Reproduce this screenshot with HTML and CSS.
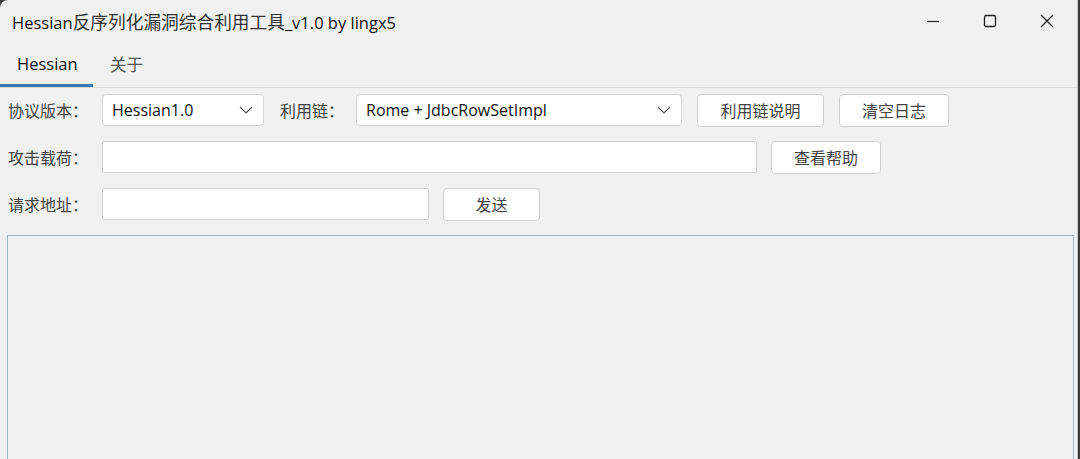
FILE: index.html
```html
<!DOCTYPE html>
<html lang="zh">
<head>
    <meta charset="UTF-8">
    <title>Hessian反序列化漏洞综合利用工具</title>
    <link rel="stylesheet" href="styles.css">
</head>
<body>
    <div class="window">
        <div class="titlebar">
            <span class="title">Hessian<span class="title-cn">反序列化漏洞综合利用工具</span>_v1.0 by lingx5</span>
            <div class="controls">
                <span class="ctl">
                    <svg width="14" height="14" viewBox="0 0 14 14"><path d="M1 7.5h12" stroke="#222" stroke-width="1.2"/></svg>
                </span>
                <span class="ctl">
                    <svg width="14" height="14" viewBox="0 0 14 14"><rect x="1.5" y="1.5" width="11" height="11" rx="1.5" fill="none" stroke="#222" stroke-width="1.3"/></svg>
                </span>
                <span class="ctl">
                    <svg width="16" height="16" viewBox="0 0 16 16"><path d="M2 2l12 12M14 2L2 14" stroke="#222" stroke-width="1.3"/></svg>
                </span>
            </div>
        </div>

        <div class="tabs">
            <span class="tab active">Hessian</span>
            <span class="tab">关于</span>
        </div>

        <div class="content">
            <div class="row">
                <label class="label">协议版本：</label>
                <div class="select sel-version">
                    <span>Hessian1.0</span>
                    <svg width="14" height="8" viewBox="0 0 14 8"><path d="M1 1l6 6 6-6" fill="none" stroke="#555" stroke-width="1.2"/></svg>
                </div>
                <label class="label label-chain">利用链：</label>
                <div class="select sel-chain">
                    <span>Rome + JdbcRowSetImpl</span>
                    <svg width="14" height="8" viewBox="0 0 14 8"><path d="M1 1l6 6 6-6" fill="none" stroke="#555" stroke-width="1.2"/></svg>
                </div>
                <button class="btn btn-info">利用链说明</button>
                <button class="btn btn-clear">清空日志</button>
            </div>

            <div class="row">
                <label class="label">攻击载荷：</label>
                <input class="field field-payload" type="text">
                <button class="btn btn-help">查看帮助</button>
            </div>

            <div class="row">
                <label class="label">请求地址：</label>
                <input class="field field-url" type="text">
                <button class="btn btn-send">发送</button>
            </div>

            <div class="log"></div>
        </div>
    </div>
</body>
</html>
```

FILE: styles.css
```css
body {
    margin: 0;
    background: #3a3a3a;
    font-family: 'Open Sans', 'Noto Sans CJK SC', sans-serif;
    color: #1a1a1a;
}

.window {
    height: 459px;
    background: #f1f1f1;
    border-top-left-radius: 8px;
    border-right: 1px solid #c9c9c9;
    margin-right: 2px;
    overflow: hidden;
    display: flex;
    flex-direction: column;
}

.titlebar {
    height: 42px;
    display: flex;
    align-items: center;
    justify-content: space-between;
    padding-left: 12px;
}

.title {
    font-size: 16.5px;
    font-family: 'Open Sans', 'Noto Sans CJK SC', sans-serif;
    color: #111;
    margin-top: -1px;
}

.title-cn {
    font-size: 17.7px;
    font-family: 'Noto Sans CJK SC', sans-serif;
    color: #333;
}

.controls {
    display: flex;
    height: 42px;
    margin-right: 2px;
}

.ctl {
    width: 57px;
    display: flex;
    align-items: center;
    justify-content: center;
}

.tabs {
    height: 45px;
    display: flex;
    border-bottom: 1px solid #dcdcdc;
}

.tab {
    display: flex;
    align-items: center;
    padding: 0 16px 2px 17px;
    font-size: 16.5px;
    color: #555;
    font-family: 'Open Sans', 'Noto Sans CJK SC', sans-serif;
}

.tab.active {
    width: 60px;
    color: #111;
    border-bottom: 3px solid #3a78b0;
    padding-bottom: 0;
}

.content {
    flex: 1;
    display: flex;
    flex-direction: column;
    gap: 15px;
    padding: 6px 0 0 8px;
}

.row {
    display: flex;
    align-items: center;
    height: 32px;
}

.label {
    width: 94px;
    font-size: 16px;
    color: #444;
    font-family: 'Noto Sans CJK SC', sans-serif;
}

.label-chain {
    width: 76px;
    margin-left: 16px;
}

.select {
    box-sizing: border-box;
    height: 32px;
    background: #fff;
    border: 1px solid #d3d3d3;
    border-radius: 4px;
    display: flex;
    align-items: center;
    justify-content: space-between;
    padding: 0 10px 0 9px;
    font-size: 16px;
    color: #111;
}

.sel-version {
    width: 162px;
}

.sel-chain {
    width: 326px;
}

.field {
    box-sizing: border-box;
    height: 32px;
    background: #fff;
    border: 1px solid #cfcfcf;
    border-radius: 2px;
    font-size: 16px;
    padding: 0 8px;
    outline: none;
}

.field-payload {
    width: 655px;
}

.field-url {
    width: 327px;
}

.btn {
    box-sizing: border-box;
    height: 33px;
    background: #fff;
    border: 1px solid #d0d0d0;
    border-radius: 4px;
    font-family: 'Noto Sans CJK SC', sans-serif;
    font-size: 16px;
    color: #444;
    margin-left: 14px;
    padding: 0;
}

.btn-info {
    width: 127px;
    margin-left: 15px;
}

.btn-clear {
    width: 110px;
    margin-left: 15px;
}

.btn-help {
    width: 110px;
}

.btn-send {
    width: 97px;
}

.log {
    flex: 1;
    width: 1065px;
    margin-left: -1px;
    border: 1px solid #a4b4bc;
    border-bottom: none;
    background: #f1f1f1;
}
```
